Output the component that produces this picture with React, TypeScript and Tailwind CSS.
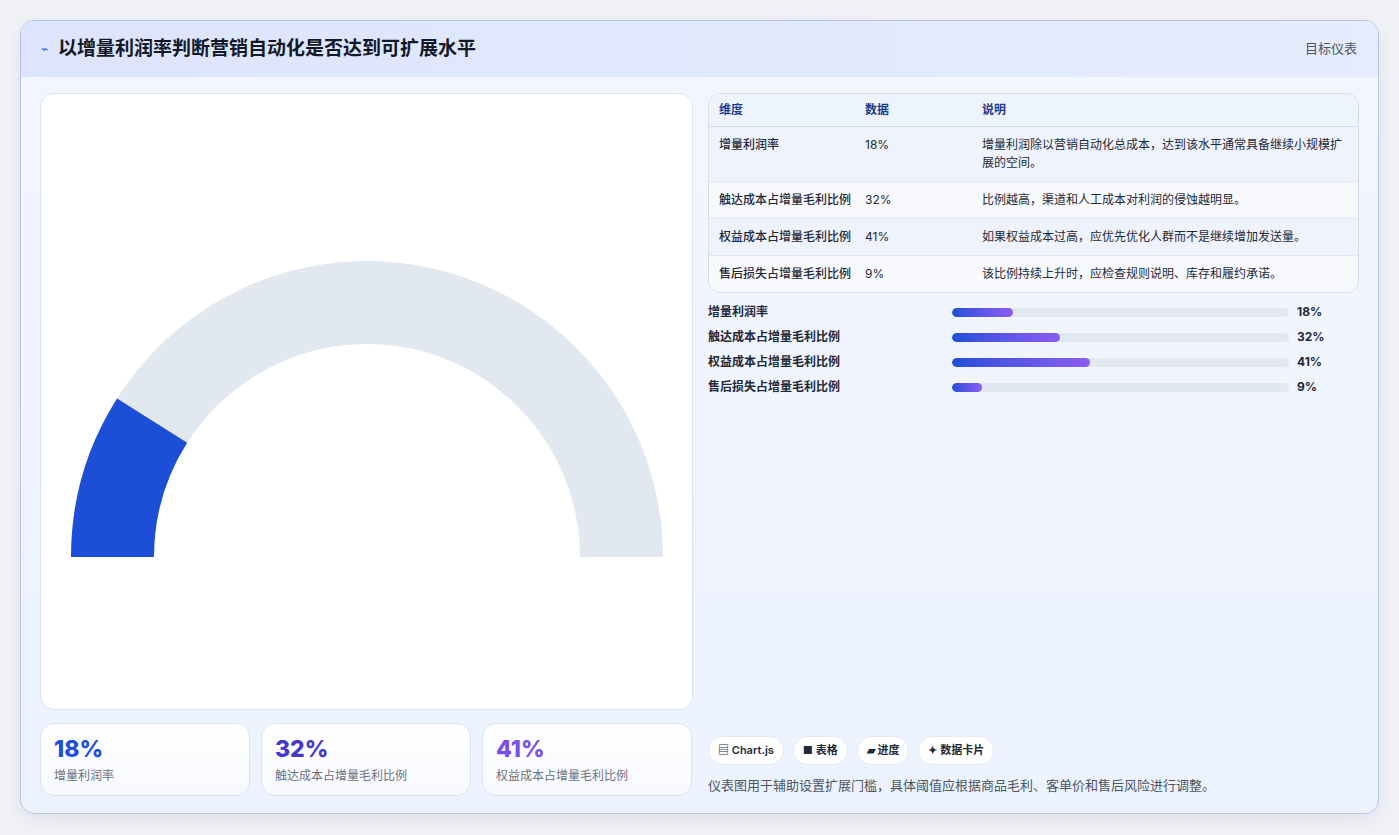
import React from "react";

const rows = [
  { k: "增量利润率", v: "18%", d: "增量利润除以营销自动化总成本，达到该水平通常具备继续小规模扩展的空间。", bg: "bg-[#eef3fd]" },
  { k: "触达成本占增量毛利比例", v: "32%", d: "比例越高，渠道和人工成本对利润的侵蚀越明显。", bg: "bg-[#f7f9fd]" },
  { k: "权益成本占增量毛利比例", v: "41%", d: "如果权益成本过高，应优先优化人群而不是继续增加发送量。", bg: "bg-[#eef3fd]" },
  { k: "售后损失占增量毛利比例", v: "9%", d: "该比例持续上升时，应检查规则说明、库存和履约承诺。", bg: "bg-[#f7f9fd]" },
];
const bars = [
  ["增量利润率", 18],
  ["触达成本占增量毛利比例", 32],
  ["权益成本占增量毛利比例", 41],
  ["售后损失占增量毛利比例", 9],
] as const;

function Gauge() {
  const cx = 326, cy = 463, R = 296, r = 213;
  const a = Math.PI * (1 - 0.18);
  const ox = cx + R * Math.cos(a), oy = cy - R * Math.sin(a);
  const ix = cx + r * Math.cos(a), iy = cy - r * Math.sin(a);
  const bg = `M ${cx - R} ${cy} A ${R} ${R} 0 0 1 ${cx + R} ${cy} L ${cx + r} ${cy} A ${r} ${r} 0 0 0 ${cx - r} ${cy} Z`;
  const fg = `M ${cx - R} ${cy} A ${R} ${R} 0 0 1 ${ox} ${oy} L ${ix} ${iy} A ${r} ${r} 0 0 0 ${cx - r} ${cy} Z`;
  return (
    <svg width="652" height="616" className="block">
      <path d={bg} fill="#e2e8f0" />
      <path d={fg} fill="#1d4ed8" />
    </svg>
  );
}

export default function App() {
  return (
    <div className="w-[1399px] h-[835px] bg-[#f1f2f6] p-[20px] pb-[21px]" style={{ fontFamily: "Inter, 'Noto Sans CJK SC', sans-serif" }}>
      <div className="h-full rounded-[14px] border border-[#b6c3ea] bg-gradient-to-b from-[#f3f6fe] to-[#ecf3ff] overflow-hidden flex flex-col shadow-[0_6px_20px_rgba(30,40,90,0.08)]">
        <div className="h-[56px] shrink-0 flex items-center justify-between px-[20px] bg-gradient-to-r from-[#dce5fd] to-[#e5ecfd]">
          <div className="flex items-center gap-[10px]">
            <span className="text-[#2563eb] text-[12px]">⌁</span>
            <span className="text-[19px] font-bold text-[#111827]">以增量利润率判断营销自动化是否达到可扩展水平</span>
          </div>
          <span className="text-[13px] text-[#4b5563] mr-[1px]">目标仪表</span>
        </div>
        <div className="flex-1 flex gap-[15px] px-[19px] pt-[16px] pb-[18px]">
          <div className="w-[653px] flex flex-col gap-[13px]">
            <div className="h-[617px] bg-white rounded-[14px] border border-[#dbe3f3] overflow-hidden"><Gauge /></div>
            <div className="flex gap-[11px]">
              {[["18%", "增量利润率", "text-[#1d4ed8]"], ["32%", "触达成本占增量毛利比例", "text-[#4338ca]"], ["41%", "权益成本占增量毛利比例", "text-[#7c4dea]"]].map(([v, l, c]) => (
                <div key={v} className="w-[210px] h-[73px] rounded-[14px] border border-[#dbe3f3] bg-gradient-to-b from-white to-[#f7f9fe] px-[13px] pt-[11px]">
                  <div className={`text-[23px] font-extrabold leading-[28px] ${c}`}>{v}</div>
                  <div className="text-[12px] text-[#6b7280] mt-[4px]">{l}</div>
                </div>
              ))}
            </div>
          </div>
          <div className="flex-1 flex flex-col">
            <div className="rounded-[12px] border border-[#d4dcee] overflow-hidden text-[12px] text-[#1f2937]">
              <div className="flex h-[33px] items-center bg-[#eef4fe] border-b border-[#d4dcee] font-bold text-[#1e3a8a]">
                <div className="w-[156px] pl-[10px]">维度</div>
                <div className="w-[117px]">数据</div>
                <div className="flex-1">说明</div>
              </div>
              {rows.map((r, i) => (
                <div key={i} className={`flex py-[9px] leading-[18px] ${r.bg} ${i < 3 ? "border-b border-[#dfe6f3]" : ""}`}>
                  <div className="w-[156px] pl-[10px] font-medium">{r.k}</div>
                  <div className="w-[117px]">{r.v}</div>
                  <div className="flex-1 pr-[14px]">{r.d}</div>
                </div>
              ))}
            </div>
            <div className="mt-[10px] flex flex-col gap-[7px]">
              {bars.map(([l, v]) => (
                <div key={l} className="flex items-center h-[18px] text-[12px] font-semibold text-[#1f2937]">
                  <div className="w-[244px]">{l}</div>
                  <div className="w-[337px] h-[9px] rounded-full bg-[#e2e8f0] overflow-hidden">
                    <div className="h-full rounded-full bg-gradient-to-r from-[#1d4ed8] to-[#8b5cf6]" style={{ width: `${v}%` }} />
                  </div>
                  <div className="ml-[8px] font-bold">{v}%</div>
                </div>
              ))}
            </div>
            <div className="flex-1" />
            <div className="flex gap-[9px] text-[11px] font-semibold text-[#1f2937]">
              {["▤ Chart.js", "■ 表格", "▰ 进度", "✦ 数据卡片"].map((t) => (
                <span key={t} className="h-[29px] px-[9px] flex items-center rounded-full bg-white border border-[#e3e8f2]">{t}</span>
              ))}
            </div>
            <div className="mt-[11px] text-[13px] text-[#4b5563] mb-[1px]">仪表图用于辅助设置扩展门槛，具体阈值应根据商品毛利、客单价和售后风险进行调整。</div>
          </div>
        </div>
      </div>
    </div>
  );
}
